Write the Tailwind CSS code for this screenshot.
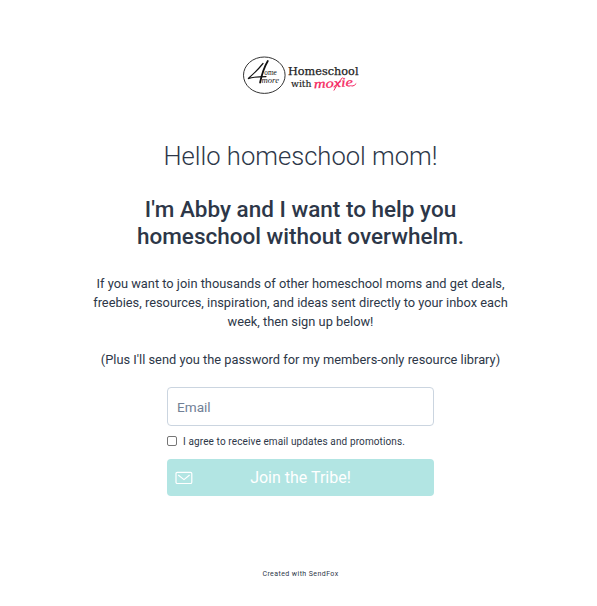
<!DOCTYPE html>
<html lang="en">
	<head>
		<meta charset="UTF-8" />
		<meta name="viewport" content="width=device-width, initial-scale=1.0" />
		<title>Homeschool with Moxie</title>
		<script src="https://cdn.jsdelivr.net/npm/@tailwindcss/browser@4"></script>
	</head>
	<body class="bg-white pl-1 font-['Roboto',sans-serif] text-[#2d3748] overflow-hidden">
		<main class="flex flex-col items-center pt-[54px] text-center">
			<!-- logo -->
			<svg class="w-[120px] h-[42px] overflow-visible" viewBox="0 0 120 42" role="img" aria-label="4 Home More, Homeschool with Moxie">
				<ellipse cx="23.3" cy="21.2" rx="20.8" ry="18.2" fill="none" stroke="#333" stroke-width="1" />
				<g fill="none" stroke="#111" stroke-linecap="round">
					<path d="M22 9.5Q15.5 17.5 7 24.6Q12.5 22.6 25 22.6" stroke-width="1.2" />
					<path d="M26.8 7Q21.8 15.5 19.1 28.5" stroke-width="1.8" />
				</g>
				<text x="23.3" y="21" font-family="Liberation Serif, serif" font-size="7.4" textLength="12.5" lengthAdjust="spacingAndGlyphs" fill="#222">ome</text>
				<text x="20.5" y="29.3" font-family="Liberation Serif, serif" font-style="italic" font-size="7.6" textLength="17.5" lengthAdjust="spacingAndGlyphs" fill="#222">more</text>
				<text x="47" y="21.3" font-family="DejaVu Serif, serif" font-size="11.5" textLength="70.5" lengthAdjust="spacingAndGlyphs" fill="#222" stroke="#222" stroke-width=".25">Homeschool</text>
				<text x="50" y="33.3" font-family="DejaVu Serif, serif" font-size="8.3" textLength="20.5" lengthAdjust="spacingAndGlyphs" fill="#222" stroke="#222" stroke-width=".15">with</text>
				<text x="73" y="33.2" transform="rotate(-3 94 33)" font-family="Liberation Serif, serif" font-style="italic" font-size="13" textLength="39" lengthAdjust="spacingAndGlyphs" fill="#f5275f" stroke="#f5275f" stroke-width=".25">moxie</text>
				<!-- long brush stroke of the x and the tail of the e -->
				<path d="M101.3 23.8Q96.5 29 93 36.2M111 32.2Q113.5 32 115 29.8" fill="none" stroke="#f5275f" stroke-width="1" stroke-linecap="round" />
			</svg>

			<h1 class="mt-[44px] text-[25.6px] leading-8 font-light">Hello homeschool mom!</h1>

			<h2 class="mt-[24px] text-[22.5px] leading-[27px] font-medium">
				I'm Abby and I want to help you<br />homeschool without overwhelm.
			</h2>

			<div class="mt-[24px] text-[12.83px] leading-[19px]">
				<p>
					If you want to join thousands of other homeschool moms and get deals,<br />
					freebies, resources, inspiration, and ideas sent directly to your inbox each<br />
					week, then sign up below!
				</p>
				<p class="mt-[19px]">(Plus I'll send you the password for my members-only resource library)</p>
			</div>

			<form class="mt-[18px] w-[267px]">
				<input
					type="email"
					placeholder="Email"
					class="block h-[39px] w-full rounded-[4px] border border-[#cbd5e0] px-[9px] text-[13.6px] placeholder:text-[#718096]"
				/>
				<label class="mt-[9px] flex h-3 items-center text-[10px] tracking-[0.12px]">
					<input type="checkbox" class="mr-[6px] size-[10px] appearance-none rounded-[2px] border border-[#767676]" />
					<span>I agree to receive email updates and promotions.</span>
				</label>
				<button type="button" class="relative mt-[12px] block h-[37px] w-full rounded-[4px] bg-[#b2e5e3] text-[16px] text-white">
					<svg class="absolute left-[8px] top-[12px] h-[14px] w-[19px]" viewBox="0 0 19 14" fill="none" stroke="#fff" stroke-width="1.2" stroke-linejoin="round" stroke-linecap="round">
						<rect x="1" y="1.3" width="15.8" height="11.2" rx="1.3" />
						<path d="M3.5 4.3L9 8.6L14.3 4.3" />
					</svg>
					Join the Tribe!
				</button>
			</form>

			<footer class="mt-[73px] text-[7px] leading-[10px] tracking-[0.42px]">Created with SendFox</footer>
		</main>
	</body>
</html>
